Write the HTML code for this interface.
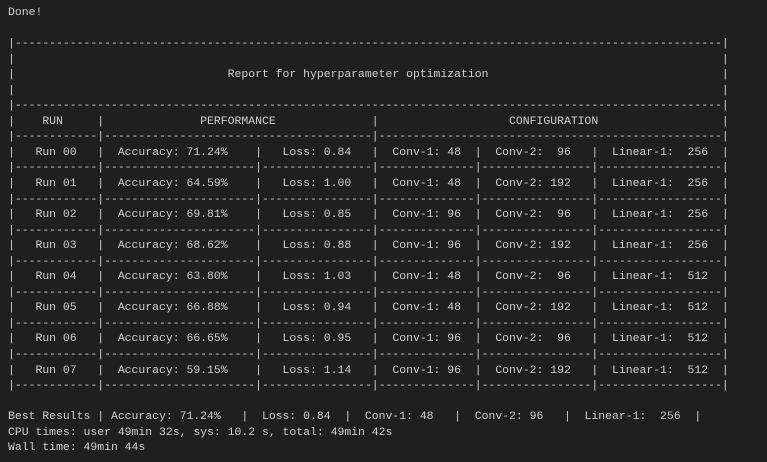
<!DOCTYPE html>
<html><head><meta charset="utf-8"><style>
html,body{margin:0;padding:0;background:#1f1f1f;width:767px;height:462px;overflow:hidden}
pre{margin:0;padding:5px 0 0 8px;font-family:"Liberation Mono",monospace;font-size:11.45px;line-height:15.55px;color:#d0d0d0;white-space:pre}
</style></head><body><pre>Done!

|-------------------------------------------------------------------------------------------------------|
|                                                                                                       |
|                               Report for hyperparameter optimization                                  |
|                                                                                                       |
|-------------------------------------------------------------------------------------------------------|
|    RUN     |              PERFORMANCE              |                   CONFIGURATION                  |
|------------|---------------------------------------|--------------------------------------------------|
|   Run 00   |  Accuracy: 71.24%    |   Loss: 0.84   |  Conv-1: 48  |  Conv-2:  96   |  Linear-1:  256  |
|------------|----------------------|----------------|--------------|----------------|------------------|
|   Run 01   |  Accuracy: 64.59%    |   Loss: 1.00   |  Conv-1: 48  |  Conv-2: 192   |  Linear-1:  256  |
|------------|----------------------|----------------|--------------|----------------|------------------|
|   Run 02   |  Accuracy: 69.81%    |   Loss: 0.85   |  Conv-1: 96  |  Conv-2:  96   |  Linear-1:  256  |
|------------|----------------------|----------------|--------------|----------------|------------------|
|   Run 03   |  Accuracy: 68.62%    |   Loss: 0.88   |  Conv-1: 96  |  Conv-2: 192   |  Linear-1:  256  |
|------------|----------------------|----------------|--------------|----------------|------------------|
|   Run 04   |  Accuracy: 63.80%    |   Loss: 1.03   |  Conv-1: 48  |  Conv-2:  96   |  Linear-1:  512  |
|------------|----------------------|----------------|--------------|----------------|------------------|
|   Run 05   |  Accuracy: 66.88%    |   Loss: 0.94   |  Conv-1: 48  |  Conv-2: 192   |  Linear-1:  512  |
|------------|----------------------|----------------|--------------|----------------|------------------|
|   Run 06   |  Accuracy: 66.65%    |   Loss: 0.95   |  Conv-1: 96  |  Conv-2:  96   |  Linear-1:  512  |
|------------|----------------------|----------------|--------------|----------------|------------------|
|   Run 07   |  Accuracy: 59.15%    |   Loss: 1.14   |  Conv-1: 96  |  Conv-2: 192   |  Linear-1:  512  |
|------------|----------------------|----------------|--------------|----------------|------------------|

Best Results | Accuracy: 71.24%   |  Loss: 0.84  |  Conv-1: 48   |  Conv-2: 96   |  Linear-1:  256  |
CPU times: user 49min 32s, sys: 10.2 s, total: 49min 42s
Wall time: 49min 44s</pre></body></html>
